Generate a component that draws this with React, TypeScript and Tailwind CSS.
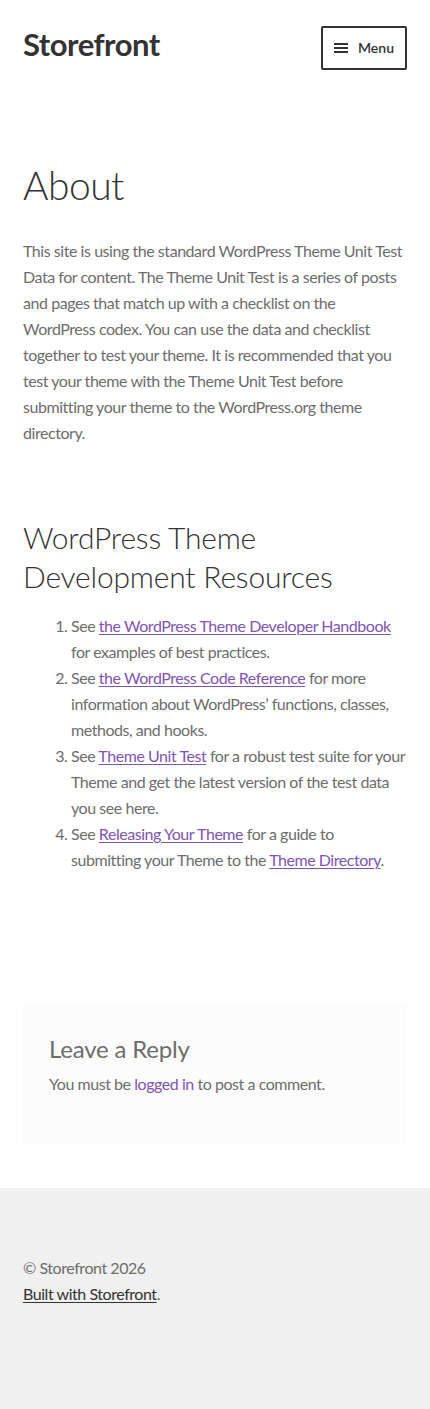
import React from 'react';

const font = "font-['Lato','Noto_Sans',sans-serif]";

const resources = [
  {
    before: 'See ',
    link: 'the WordPress Theme Developer Handbook',
    after: ' for examples of best practices.',
  },
  {
    before: 'See ',
    link: 'the WordPress Code Reference',
    after: ' for more information about WordPress\u2019 functions, classes, methods, and hooks.',
  },
  {
    before: 'See ',
    link: 'Theme Unit Test',
    after: ' for a robust test suite for your Theme and get the latest version of the test data you see here.',
  },
];

function MenuIcon() {
  return (
    <svg width="14" height="12" viewBox="0 0 14 12" className="shrink-0">
      <rect x="0" y="1" width="14" height="2" fill="#333333" />
      <rect x="0" y="5" width="14" height="2" fill="#333333" />
      <rect x="0" y="9" width="14" height="2" fill="#333333" />
    </svg>
  );
}

export default function App() {
  return (
    <div className={`min-h-screen bg-white text-[16px] leading-[26px] tracking-[-0.45px] text-[#6d6d6d] ${font}`}>
      {/* Header */}
      <header className="flex items-center justify-between px-[23px] pt-[26px]">
        <a href="#" className="pb-[7px] text-[31px] font-bold leading-none tracking-[-0.5px] text-[#333333]">
          Storefront
        </a>
        <button className="flex h-[44px] w-[86px] items-center justify-center gap-[10px] rounded-[2px] border-2 border-[#333333] text-[14px] font-semibold tracking-normal text-[#333333]">
          <MenuIcon />
          <span>Menu</span>
        </button>
      </header>

      {/* Page content */}
      <main className="px-[23px]">
        <h1 className="mt-[90px] text-[39px] font-light leading-[51px] tracking-[-0.5px] text-[#333333]">About</h1>
        <p className="mt-[27px]">
          This site is using the standard WordPress Theme Unit Test Data for content. The Theme Unit Test is a series
          of posts and pages that match up with a checklist on the WordPress codex. You can use the data and checklist
          together to test your theme. It is recommended that you test your theme with the Theme Unit Test before
          submitting your theme to the WordPress.org theme directory.
        </p>

        <h2 className="mt-[72px] text-[30px] font-light leading-[39px] tracking-[-0.2px] text-[#333333]">
          WordPress Theme Development Resources
        </h2>
        <ol className="ml-[48px] mt-[17px] list-decimal">
          {resources.map((r) => (
            <li key={r.link}>
              {r.before}
              <a href="#" className="text-[#7f54b3] underline underline-offset-2">
                {r.link}
              </a>
              {r.after}
            </li>
          ))}
          <li>
            See{' '}
            <a href="#" className="text-[#7f54b3] underline underline-offset-2">
              Releasing Your Theme
            </a>{' '}
            for a guide to submitting your Theme to the{' '}
            <a href="#" className="text-[#7f54b3] underline underline-offset-2">
              Theme Directory
            </a>
            .
          </li>
        </ol>

        {/* Comments */}
        <section className="mb-[43px] mt-[130px] bg-[#fcfcfc] px-[26px] pb-[48px] pt-[30px]">
          <h3 className="text-[24px] leading-[32px] tracking-[-0.2px] text-[#6d6d6d]">Leave a Reply</h3>
          <p className="mt-[6px]">
            You must be{' '}
            <a href="#" className="text-[#7f54b3]">
              logged in
            </a>{' '}
            to post a comment.
          </p>
        </section>
      </main>

      {/* Footer */}
      <footer className="min-h-[221px] bg-[#f0f0f0] px-[23px] pb-[80px] pt-[67px]">
        <p>&copy; Storefront 2026</p>
        <p>
          <a href="#" className="text-[#333333] underline underline-offset-2">
            Built with Storefront
          </a>
          .
        </p>
      </footer>
    </div>
  );
}
